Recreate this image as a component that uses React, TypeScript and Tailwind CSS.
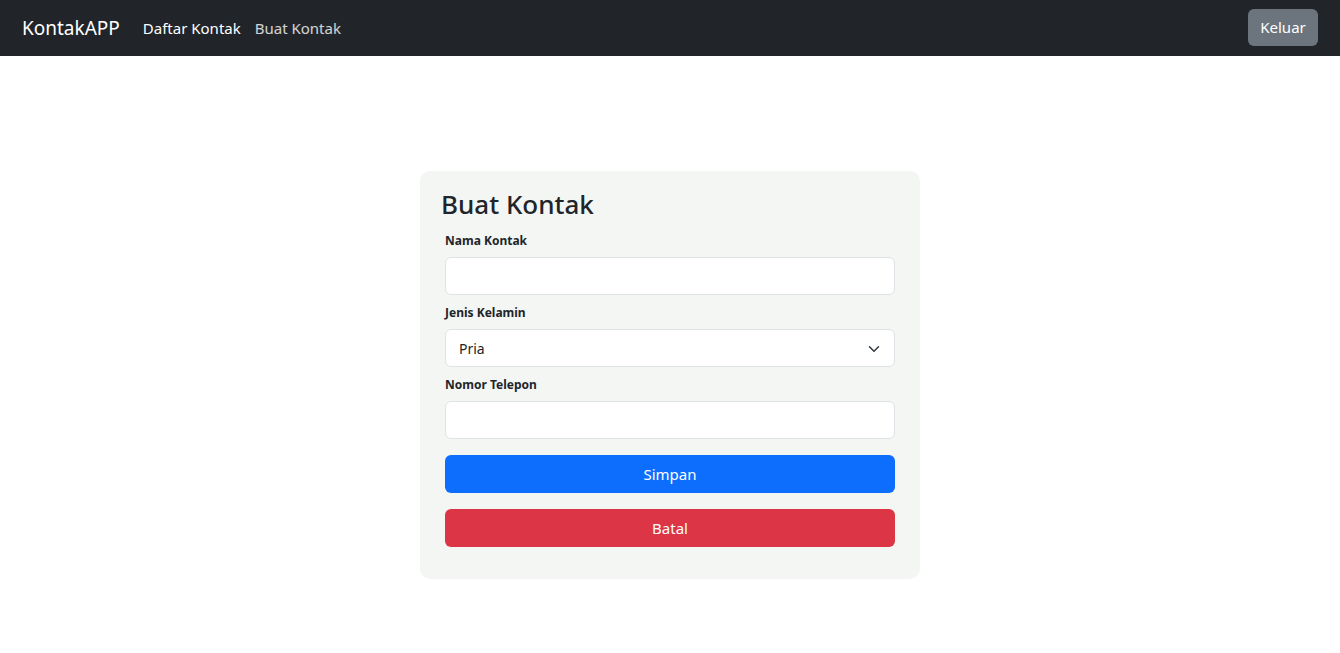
import React from "react";

export default function App() {
  return (
    <div className="min-h-[653px] bg-white text-[#212529]" style={{ fontFamily: '"Noto Sans", "Open Sans", sans-serif' }}>
      <nav className="h-[56px] bg-[#212529] flex items-center justify-between pl-[22px] pr-[22px]">
        <div className="flex items-center">
          <span className="text-[19px] text-white mr-[23px]">KontakAPP</span>
          <span className="text-[15px] text-white mr-[14px]">Daftar Kontak</span>
          <span className="text-[15px] text-white/80">Buat Kontak</span>
        </div>
        <button className="h-[37px] w-[70px] rounded-[6px] bg-[#6c757d] text-white text-[15px] mb-[1px]">Keluar</button>
      </nav>
      <div className="flex justify-center pt-[115px]">
        <div className="w-[500px] bg-[#f4f6f4] rounded-[10px] pt-[15px] pb-[32px] px-[21px]">
          <h3 className="text-[26px] leading-[36px] font-medium mb-[9px]">Buat Kontak</h3>
          <div className="px-[4px] flex flex-col">
            <label className="text-[12px] font-bold leading-[20px] mb-[6px]">Nama Kontak</label>
            <input className="h-[38px] bg-white border border-[#dee2e6] rounded-[6px] px-3 mb-[8px]" />
            <label className="text-[12px] font-bold leading-[20px] mb-[6px]">Jenis Kelamin</label>
            <div className="relative h-[38px] bg-white border border-[#dee2e6] rounded-[6px] mb-[8px] flex items-center pl-[13px] text-[14px]">
              Pria
              <svg className="absolute right-[14px] top-[13px]" width="12" height="12" viewBox="0 0 16 16" fill="none" stroke="#343a40" strokeWidth="2" strokeLinecap="round" strokeLinejoin="round">
                <path d="m2 5 6 6 6-6" />
              </svg>
            </div>
            <label className="text-[12px] font-bold leading-[20px] mb-[6px]">Nomor Telepon</label>
            <input className="h-[38px] bg-white border border-[#dee2e6] rounded-[6px] px-3" />
            <button className="mt-[16px] h-[38px] rounded-[6px] bg-[#0d6efd] text-white text-[15px]">Simpan</button>
            <button className="mt-[16px] h-[38px] rounded-[6px] bg-[#dc3545] text-white text-[15px]">Batal</button>
          </div>
        </div>
      </div>
    </div>
  );
}
